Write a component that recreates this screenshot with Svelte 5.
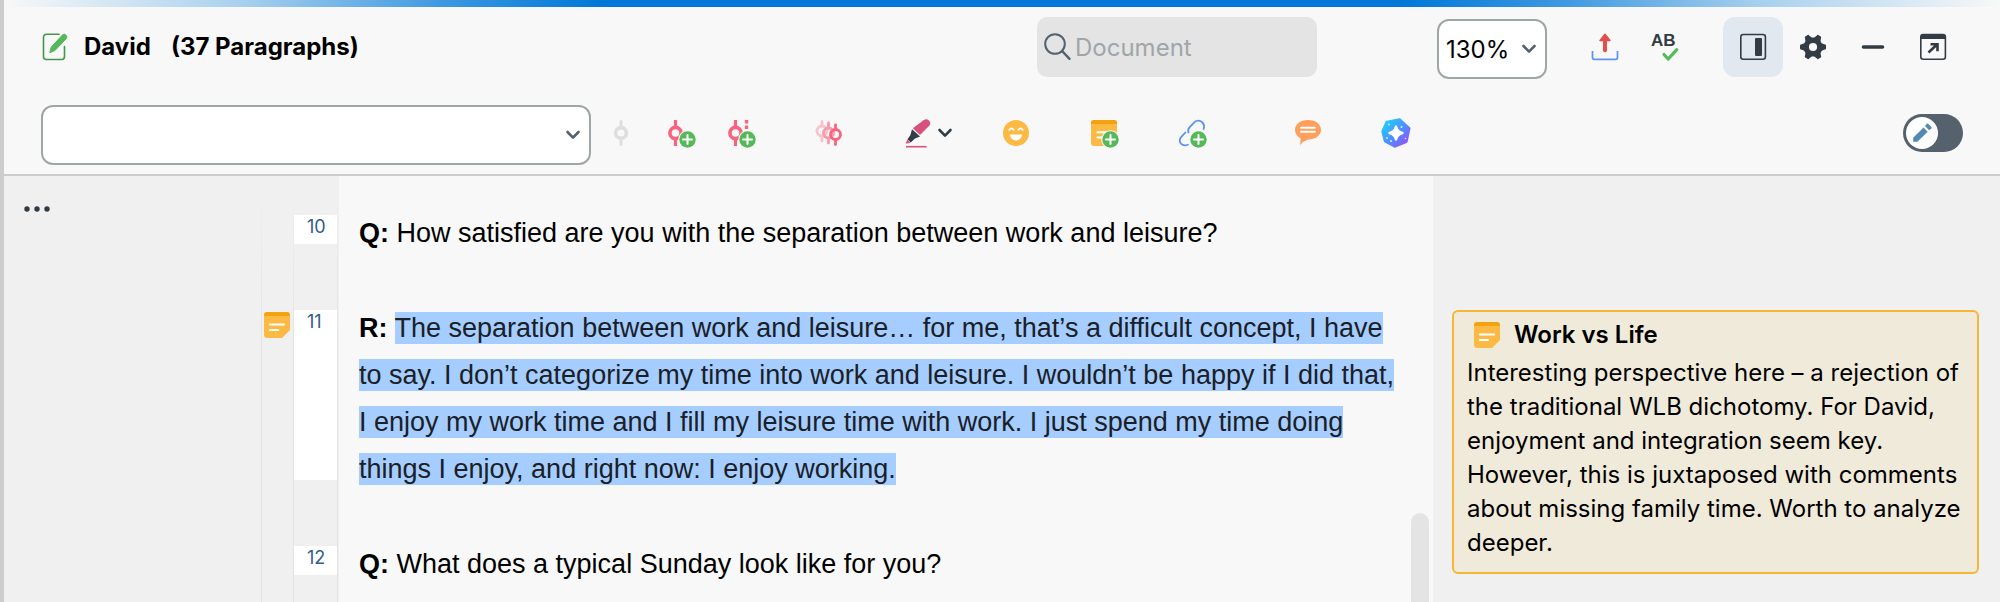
<script>
  const paragraphs = [
    {
      number: 10,
      speaker: "Q:",
      text: "How satisfied are you with the separation between work and leisure?",
    },
    {
      number: 11,
      speaker: "R:",
      text: "The separation between work and leisure… for me, that’s a difficult concept, I have to say. I don’t categorize my time into work and leisure. I wouldn’t be happy if I did that, I enjoy my work time and I fill my leisure time with work. I just spend my time doing things I enjoy, and right now: I enjoy working.",
      selected: true,
      memo: true,
    },
    {
      number: 12,
      speaker: "Q:",
      text: "What does a typical Sunday look like for you?",
    },
  ];

  const zoomLevels = ["100%", "130%", "150%"];

  let zoom = $state("130%");
  let code = $state("");
  let search = $state("");
  let sidebarOpen = $state(true);
  let editMode = $state(false);
</script>

{#snippet chevron()}
  <svg class="chevron" width="16" height="12" viewBox="0 0 16 12">
    <path d="M2.500 3l5.500 5.600L13.500 3" fill="none" stroke="currentColor" stroke-width="2.600" stroke-linecap="round" stroke-linejoin="round" />
  </svg>
{/snippet}

{#snippet plusBadge()}
  <circle cx="21.5" cy="21.5" r="9.3" fill="#f8f8f8" />
  <circle cx="21.5" cy="21.5" r="8.2" fill="#55b95a" />
  <path d="M21.5 17v9M17 21.5h9" stroke="#fff" stroke-width="2" stroke-linecap="round" />
{/snippet}

{#snippet memoIcon()}
  <svg width="26" height="26" viewBox="0 0 26 26">
    <path d="M0 4h26v14l-8 8H3.500a3.500 3.500 0 0 1-3.500-3.500z" fill="#fcba45" />
    <path d="M0 4V3a3 3 0 0 1 3-3h20a3 3 0 0 1 3 3v1z" fill="#f4a20e" />
    <path d="M6 12.500h14M6 18h8" stroke="#fff" stroke-width="2.200" stroke-linecap="round" />
  </svg>
{/snippet}

<div class="app">
  <div class="accent"></div>

  <header>
    <div class="bar">
      <svg class="icon" viewBox="0 0 30 30">
        <path d="M18 2.300H5.500a3 3 0 0 0-3 3v19.200a3 3 0 0 0 3 3H20.500a3 3 0 0 0 3-3V14.500" fill="none" stroke="#43974a" stroke-width="1.600" stroke-linecap="round" />
        <path d="M8.800 20.800l1.300-5.600L21.200 3.200a2.500 2.500 0 0 1 3.800 0 2.500 2.500 0 0 1 .4 3.300L14 18.400z" fill="#55b95a" stroke="#55b95a" stroke-width="1" stroke-linejoin="round" />
      </svg>
      <h1><span>David</span><span>(37 Paragraphs)</span></h1>

      <label class="search">
        <svg class="icon" viewBox="0 0 30 30" fill="none" stroke="#55616d" stroke-width="2" stroke-linecap="round">
          <circle cx="12" cy="12" r="9.800" />
          <path d="M19.200 19.200l7.300 7.600" stroke-width="2.400" />
        </svg>
        <input type="text" placeholder="Document" aria-label="Search document" bind:value={search} />
      </label>

      <div class="select zoom">
        <select aria-label="Zoom" bind:value={zoom}>
          {#each zoomLevels as level}
            <option>{level}</option>
          {/each}
        </select>
        {@render chevron()}
      </div>

      <div class="group">
        <button aria-label="Export">
          <svg class="icon" viewBox="0 0 30 30">
            <path d="M2.500 19v6.500a1.800 1.800 0 0 0 1.800 1.800h21.400a1.800 1.800 0 0 0 1.800-1.800V19" fill="none" stroke="#5b93f0" stroke-width="1.700" />
            <path d="M15 2.300l5 6.200H10z" fill="#e64c4c" stroke="#e64c4c" stroke-width="1.400" stroke-linejoin="round" />
            <path d="M15 7v11.200" stroke="#e64c4c" stroke-width="4" stroke-linecap="round" />
          </svg>
        </button>
        <button aria-label="Spell check">
          <svg class="icon" viewBox="0 0 30 30">
            <text x="1" y="14">AB</text>
            <path d="M14 22.500l4.200 4.500 8.600-9.300" fill="none" stroke="#55b95a" stroke-width="3.200" stroke-linecap="round" stroke-linejoin="round" />
          </svg>
        </button>
      </div>

      <div class="group">
        <button class:active={sidebarOpen} aria-label="Memo sidebar" aria-pressed={sidebarOpen} onclick={() => (sidebarOpen = !sidebarOpen)}>
          <svg class="icon" viewBox="0 0 30 30">
            <rect x="2.800" y="2.500" width="24.600" height="24.800" rx="2.500" fill="none" stroke="#333c44" stroke-width="1.600" />
            <rect x="17" y="6" width="7" height="18" rx="1" fill="#333c44" />
          </svg>
        </button>
        <button aria-label="Settings">
          <svg class="icon" viewBox="0 0 30 30">
            <circle cx="15" cy="15" r="6.800" fill="none" stroke="#333c44" stroke-width="5.400" />
            {#each [0, 60, 120, 180, 240, 300] as angle}
              <path d="M21.500 10.500L27 12.600a1 1 0 0 1 1 1v2.800a1 1 0 0 1-1 1l-5.500 2.100z" fill="#333c44" transform="rotate({angle} 15 15)" />
            {/each}
          </svg>
        </button>
        <button aria-label="Minimize">
          <svg class="icon" viewBox="0 0 30 30">
            <path d="M5.500 15h19" stroke="#333c44" stroke-width="3.600" stroke-linecap="round" />
          </svg>
        </button>
        <button aria-label="Open in window">
          <svg class="icon" viewBox="0 0 30 30">
            <rect x="2.800" y="2.500" width="24.600" height="24.800" rx="2.500" fill="none" stroke="#333c44" stroke-width="1.600" />
            <path d="M2.800 7V4a1.500 1.500 0 0 1 1.500-1.500h21.600A1.500 1.500 0 0 1 27.400 4v3z" fill="#333c44" />
            <path d="M10.500 20.500l8.500-8M12.500 12.200h7v7" fill="none" stroke="#333c44" stroke-width="2.600" />
          </svg>
        </button>
      </div>
    </div>

    <div class="bar">
      <div class="select codes">
        <select aria-label="Code" bind:value={code}>
          <option value=""></option>
        </select>
        {@render chevron()}
      </div>

      <div class="tools">
        <div class="group">
          <button aria-label="Apply code" disabled>
            <svg class="icon" viewBox="0 0 30 30" fill="none" stroke="#dcdedf" stroke-linecap="round">
              <circle cx="15" cy="15" r="5.400" stroke-width="3.600" />
              <path d="M15 3.500v5M15 21.500v5" stroke-width="3" />
            </svg>
          </button>
          <button aria-label="New code">
            <svg class="icon" viewBox="0 0 30 30">
              <g fill="none" stroke="#f9637e">
                <circle cx="9.500" cy="15" r="5.600" stroke-width="3.600" />
                <path d="M9.500 2v7M9.500 21v7" stroke-width="3.200" />
              </g>
              {@render plusBadge()}
            </svg>
          </button>
          <button aria-label="New in-vivo code">
            <svg class="icon" viewBox="0 0 30 30">
              <g fill="none" stroke="#f9637e">
                <circle cx="9.500" cy="15" r="5.600" stroke-width="3.600" />
                <path d="M9.500 2v7M9.500 21v7" stroke-width="3.200" />
                <path d="M20.500 2v3.400M20.500 7.600V11" stroke-width="3.400" />
              </g>
              {@render plusBadge()}
            </svg>
          </button>
        </div>

        <button aria-label="Code with multiple codes">
          <svg class="icon" viewBox="0 0 30 30" fill="none" stroke-width="2.800" stroke-linecap="round">
            <g stroke="#f9c3cd">
              <circle cx="8" cy="13" r="5" />
              <path d="M8 3.500V7M8 19v4" />
            </g>
            <g stroke="#f69aac">
              <circle cx="14.500" cy="15" r="5" />
              <path d="M14.500 5v4M14.500 21v4" />
            </g>
            <g stroke="#f9637e">
              <circle cx="21.500" cy="16.500" r="5" />
              <path d="M21.500 7v4M21.500 22.500v4" />
            </g>
          </svg>
        </button>

        <button class="marker" aria-label="Highlight">
          <svg class="icon" viewBox="0 0 30 30">
            <path d="M9.800 10.200L20.500 2.200q3-2 5.400.2 2.400 2.500.6 5L17 17z" fill="#da507d" />
            <path d="M9 11.200l8 7.300-5 2-4.300 4-3.200-3.200 2.800-4z" fill="#333c44" />
            <path d="M4.300 21.500l3 3q-2 1.500-4.700.7z" fill="#e2557f" />
            <path d="M3 28.700h20.500" stroke="#da507d" stroke-width="1.600" />
          </svg>
          {@render chevron()}
        </button>

        <button aria-label="Emoticode">
          <svg class="icon" viewBox="0 0 30 30">
            <circle cx="15" cy="15" r="13" fill="#fcba45" />
            <path d="M8.200 12q2.300-3.200 4.600 0M17.200 12q2.300-3.200 4.600 0" fill="none" stroke="#fff" stroke-width="1.600" stroke-linecap="round" />
            <path d="M9 16.500h12a6 6 0 0 1-12 0z" fill="#fff" />
          </svg>
        </button>

        <button aria-label="New memo">
          <svg class="icon" viewBox="0 0 30 30">
            <path d="M2 6h26v22H5a3 3 0 0 1-3-3z" fill="#fcba45" />
            <path d="M2 6V4.500A2.500 2.500 0 0 1 4.500 2h21A2.500 2.500 0 0 1 28 4.500V6z" fill="#f4a20e" />
            <path d="M8.500 14.200h10M8.500 19.500h4" stroke="#fff" stroke-width="2" stroke-linecap="round" />
            {@render plusBadge()}
          </svg>
        </button>

        <button aria-label="New link">
          <svg class="icon" viewBox="0 0 30 30">
            <g fill="none" stroke="#5b93f0" stroke-width="1.800" stroke-linecap="round">
              <path d="M11.500 14.500q-1-3 1-5.200l5-5.200q3-2.600 6.800-.6 4 3 2.300 7.500" />
              <path d="M8.500 14.500l-4 4.200q-3.300 3.800-.6 7 3 2.800 7 1" />
            </g>
            {@render plusBadge()}
          </svg>
        </button>

        <div class="group far">
          <button aria-label="Comment">
            <svg class="icon" viewBox="0 0 30 30">
              <path d="M15 2c7.500 0 13 4.200 13 9.800S22.500 21.600 15 21.600q-4.500 1.400-8 5.600l.7-6.800C4.200 18.600 2 15.500 2 11.800 2 6.200 7.500 2 15 2z" fill="#ff9f5b" />
              <path d="M8 9.700h14M8 13.700h14" stroke="#fff" stroke-width="2" stroke-linecap="round" />
            </svg>
          </button>
        </div>

        <button aria-label="AI Assist">
          <svg class="icon" viewBox="0 0 30 30">
            <defs>
              <linearGradient id="assist" gradientUnits="userSpaceOnUse" x1="3" y1="3" x2="27" y2="27">
                <stop offset="0.100" stop-color="#25c5ff" />
                <stop offset="0.550" stop-color="#508dff" />
                <stop offset="0.950" stop-color="#9155f8" />
              </linearGradient>
            </defs>
            <path d="M6 4.500L18.500 2l9.300 8.500-2.800 13L14 28l-9.500-5L2 13.500z" fill="url(#assist)" stroke="url(#assist)" stroke-width="3.400" stroke-linejoin="round" />
            <path d="M15 8.500q1.200 5.300 6.500 6.500-5.300 1.200-6.500 6.500-1.200-5.300-6.500-6.500 5.300-1.200 6.500-6.500z" fill="#fff" stroke="#fff" stroke-width="2.400" stroke-linejoin="round" />
            <g fill="#d6edff">
              <circle cx="8" cy="6.500" r="0.900" />
              <circle cx="20.500" cy="9" r="1" />
              <circle cx="6" cy="20" r="0.900" />
              <circle cx="10" cy="23" r="1" />
              <circle cx="24.500" cy="20.500" r="0.800" />
            </g>
          </svg>
        </button>
      </div>

      <label class="toggle">
        <input type="checkbox" role="switch" aria-label="Edit mode" bind:checked={editMode} />
        <span class="knob">
          <svg width="30" height="30" viewBox="0 0 30 30" fill="#5389b3">
            <path d="M6.200 23.800v-4L16.500 9.500l4.200 4.200-10.300 10.100z" />
            <path d="M18 8l1.800-2.200q.7-.6 1.400 0l3.200 3.200q.6.700 0 1.300L22.200 12.200z" />
          </svg>
        </span>
      </label>
    </div>
  </header>

  <main>
    <aside class="codings">
      <button class="more" aria-label="More options">
        <svg width="30" height="10" viewBox="0 0 30 10" fill="#333c44">
          <circle cx="5" cy="5" r="2.700" />
          <circle cx="15" cy="5" r="2.700" />
          <circle cx="25" cy="5" r="2.700" />
        </svg>
      </button>
    </aside>

    <article>
      {#each paragraphs as paragraph}
        <div class="row">
          <div class="memo">
            {#if paragraph.memo}
              {@render memoIcon()}
            {/if}
          </div>
          <div class="number">{paragraph.number}</div>
          <p>
            <b>{paragraph.speaker}</b>
            {#if paragraph.selected}
              <mark>{paragraph.text}</mark>
            {:else}
              {paragraph.text}
            {/if}
          </p>
        </div>
      {/each}
      <div class="thumb"></div>
    </article>

    <aside class="memos">
      {#if sidebarOpen}
        <section class="note">
          <h2>{@render memoIcon()}Work vs Life</h2>
          <p>
            Interesting perspective here – a rejection of the traditional WLB dichotomy. For David,
            enjoyment and integration seem key. However, this is juxtaposed with comments about
            missing family time. Worth to analyze deeper.
          </p>
        </section>
      {/if}
    </aside>
  </main>
</div>

<style>
  :global(body) {
    margin: 0;
  }

  * {
    box-sizing: border-box;
  }

  .app {
    display: flex;
    flex-direction: column;
    min-height: 100vh;
    border-left: 4px solid #cdcdcd;
    background: #f8f8f8;
    color: #000;
    font-family: Inter, "Open Sans", sans-serif;
    font-size: 24px;
  }

  svg {
    display: block;
    flex: none;
  }

  .accent {
    height: 7px;
    background: linear-gradient(
      90deg,
      #f8f8f8,
      #a8d0ee 12%,
      #3d98e0 22%,
      #0078d7 30%,
      #0078d7 70%,
      #3d98e0 78%,
      #a8d0ee 88%,
      #f8f8f8
    );
  }

  header {
    display: flex;
    flex-direction: column;
    gap: 22px;
    padding: 8px 37px 9px;
    border-bottom: 2px solid #cdcdcd;
  }

  .bar {
    display: flex;
    align-items: center;
    height: 64px;
  }

  .icon {
    width: 30px;
    height: 30px;
  }

  h1 {
    display: flex;
    gap: 20px;
    margin: 0 auto 0 13px;
    font-size: 24px;
    font-weight: 700;
    line-height: 32px;
    white-space: nowrap;
  }

  .search {
    display: flex;
    align-items: center;
    gap: 2px;
    width: 280px;
    height: 60px;
    margin-right: 120px;
    padding-left: 6px;
    border-radius: 10px;
    background: #e4e4e4;
  }

  .search input {
    flex: 1;
    min-width: 0;
    padding: 0;
    border: 0;
    outline: 0;
    background: none;
    font: inherit;
  }

  .search input::placeholder {
    color: #a0a5a9;
    opacity: 1;
  }

  .select {
    position: relative;
    height: 60px;
    margin-top: 4px;
  }

  .select select {
    width: 100%;
    height: 100%;
    padding: 0 7px;
    border: 2px solid #a0a6a6;
    border-radius: 12px;
    appearance: none;
    background: #fff;
    color: #000;
    font: inherit;
  }

  .select .chevron {
    position: absolute;
    top: 24px;
    right: 10px;
    color: #55616d;
    pointer-events: none;
  }

  .zoom {
    width: 110px;
    margin-right: 28px;
  }

  .codes {
    width: 550px;
  }

  .group {
    display: flex;
  }

  .group + .group {
    margin-left: 28px;
  }

  .tools {
    display: flex;
    gap: 28px;
  }

  .tools .far {
    margin-left: 28px;
  }

  button {
    display: flex;
    align-items: center;
    justify-content: center;
    width: 60px;
    height: 60px;
    padding: 0;
    border: 0;
    border-radius: 12px;
    background: none;
  }

  button.active {
    background: #e2e8f0;
  }

  button text {
    fill: #333c44;
    font-size: 17px;
    font-weight: 700;
  }

  .marker {
    gap: 4px;
    width: 71px;
    padding-left: 10px;
    color: #333c44;
  }

  .toggle {
    display: flex;
    width: 60px;
    height: 38px;
    margin-left: auto;
    padding: 3px;
    border-radius: 19px;
    background: #55616d;
  }

  .toggle:has(input:checked) {
    justify-content: flex-end;
  }

  .toggle input {
    width: 0;
    height: 0;
    margin: 0;
    appearance: none;
  }

  .knob {
    display: flex;
    align-items: center;
    justify-content: center;
    width: 32px;
    height: 32px;
    border-radius: 50%;
    background: #fff;
  }

  main {
    display: flex;
    flex: 1;
  }

  .codings {
    width: 257px;
    background: #f0f0f0;
  }

  .more {
    width: 30px;
    height: 30px;
    margin: 18px 0 0 18px;
  }

  /* margin lines fade in below the header */
  article {
    position: relative;
    display: flex;
    flex: 1;
    flex-direction: column;
    gap: 48px;
    padding: 34px 34px 14px 0;
    background:
      linear-gradient(#f0f0f0, #e3e3e3 160px) 0 0 / 1px 100% no-repeat,
      linear-gradient(#f0f0f0, #e3e3e3 160px) 32px 0 / 1px 100% no-repeat,
      linear-gradient(#f0f0f0, #e3e3e3 160px) 76px 0 / 1px 100% no-repeat,
      linear-gradient(#f0f0f0, #f0f0f0) 0 0 / 78px 100% no-repeat,
      #f8f8f8;
  }

  .row {
    display: flex;
  }

  .memo {
    width: 33px;
    padding: 7px 0 0 3px;
  }

  .number {
    width: 43px;
    margin: 5px 22px 13px 0;
    padding-left: 13px;
    background: #fff;
    color: #2f5d8c;
    font-size: 18px;
    line-height: 24px;
  }

  article p {
    flex: 1;
    margin: 0;
    font-family: "Liberation Sans", Arial, sans-serif;
    font-size: 27px;
    line-height: 47px;
  }

  mark {
    padding: 1px 0;
    background: #a5cdff;
    color: #1a2026;
  }

  .thumb {
    position: absolute;
    top: 337px;
    right: 4px;
    bottom: 0;
    width: 18px;
    border-radius: 9px 9px 0 0;
    background: #e4e4e4;
  }

  .memos {
    width: 567px;
    padding: 134px 21px 0 19px;
    background: #f0f0f0;
  }

  .note {
    padding: 6px 13px 12px;
    border: 2px solid #f5b735;
    border-radius: 6px;
    background: #f0eada;
  }

  h2 {
    display: flex;
    align-items: center;
    gap: 14px;
    margin: 0 0 4px;
    padding-left: 7px;
    font-size: 24px;
    font-weight: 600;
    line-height: 34px;
  }

  .note p {
    margin: 0;
    line-height: 34px;
  }
</style>
